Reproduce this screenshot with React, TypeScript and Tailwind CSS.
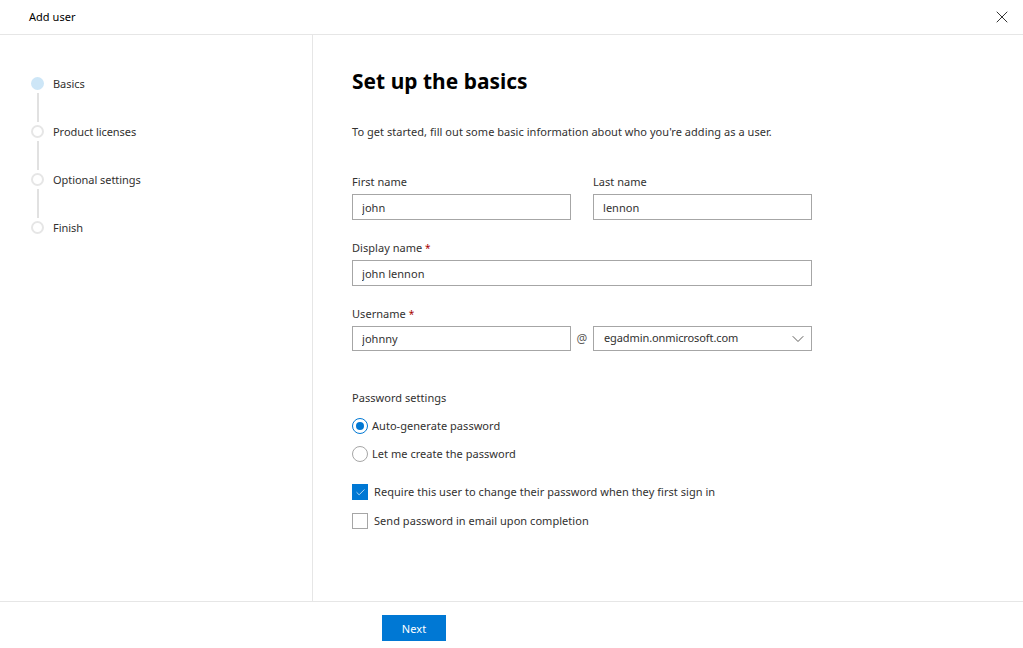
import { X, ChevronDown, Check } from "lucide-react";

const steps = ["Basics", "Product licenses", "Optional settings", "Finish"];

function Field({ label, value, required, className }: { label: string; value: string; required?: boolean; className?: string }) {
  return (
    <div className={className}>
      <div className="h-[18px] leading-[18px] text-[#323130]">
        {label}
        {required && <span className="text-[#a80000] text-[10px]"> *</span>}
      </div>
      <input
        defaultValue={value}
        className="block mt-[3px] w-full h-[26px] px-[9px] border border-[#a6a6a6] text-[#323130] outline-none"
      />
    </div>
  );
}

export default function App() {
  return (
    <div className="w-[1023px] h-[648px] overflow-hidden flex flex-col bg-white text-[11px] tracking-[0.04px] font-['Noto_Sans','Open_Sans',sans-serif]">
      {/* Header */}
      <div className="h-[35px] shrink-0 flex items-center justify-between pl-[29px] pr-[11px] border-b border-[#e6e6e6]">
        <span className="text-black">Add user</span>
        <X className="w-[20px] h-[20px] text-[#333]" strokeWidth={1.2} />
      </div>

      <div className="flex-1 flex min-h-0">
        {/* Steps */}
        <div className="w-[313px] shrink-0 border-r border-[#e6e6e6] pt-[42px] pl-[31px]">
          {steps.map((s, i) => (
            <div key={s}>
              <div className="flex items-center h-[13px]">
                <span className={i === 0 ? "w-[13px] h-[13px] rounded-full bg-[#cde6f7]" : "w-[13px] h-[13px] rounded-full border-2 border-[#e6e6e6]"} />
                <span className="ml-[9px] pt-[2px] text-[#323130] tracking-[-0.05px]">{s}</span>
              </div>
              {i < steps.length - 1 && <div className="w-[2px] h-[29px] ml-[6px] my-[3px] bg-[#e1e1e1]" />}
            </div>
          ))}
        </div>

        {/* Form */}
        <div className="flex-1 pl-[39px] pt-[31px]">
          <h1 className="text-[20.9px] leading-[30px] font-bold text-black">Set up the basics</h1>
          <p className="mt-[27px] leading-[18px] text-[#323130]">
            To get started, fill out some basic information about who you're adding as a user.
          </p>

          <div className="w-[460px] mt-[32px]">
            <div className="flex gap-[22px]">
              <Field label="First name" value="john" className="w-[219px]" />
              <Field label="Last name" value="lennon" className="w-[219px]" />
            </div>
            <Field label="Display name" value="john lennon" required className="mt-[19px]" />
            <div className="mt-[19px] h-[18px] leading-[18px] text-[#323130]">
              Username <span className="text-[#a80000] text-[10px]">*</span>
            </div>
            <div className="mt-[3px] flex items-center">
              <input
                defaultValue="johnny"
                className="w-[219px] h-[25px] px-[9px] border border-[#a6a6a6] text-[#323130] outline-none"
              />
              <span className="w-[22px] text-center text-[#605e5c] text-[12px]">@</span>
              <div className="w-[219px] h-[25px] pl-[10px] pr-[3px] flex items-center justify-between border border-[#a6a6a6] text-[#323130] tracking-[-0.1px]">
                egadmin.onmicrosoft.com
                <ChevronDown className="w-[20px] h-[20px] text-[#605e5c]" strokeWidth={1.2} />
              </div>
            </div>
          </div>

          <div className="mt-[38px] leading-[18px] text-[#323130]">Password settings</div>
          <div className="mt-[11px] flex flex-col gap-[12px]">
            <label className="flex items-center h-[16px] text-[#323130]">
              <span className="w-[16px] h-[16px] rounded-full border border-[#0078d4] flex items-center justify-center">
                <span className="w-[8px] h-[8px] rounded-full bg-[#0078d4]" />
              </span>
              <span className="ml-[4px]">Auto-generate password</span>
            </label>
            <label className="flex items-center h-[16px] text-[#323130]">
              <span className="w-[16px] h-[16px] rounded-full border border-[#a6a6a6]" />
              <span className="ml-[4px]">Let me create the password</span>
            </label>
          </div>

          <div className="mt-[22px] flex flex-col gap-[13px]">
            <label className="flex items-center h-[16px] text-[#323130]">
              <span className="w-[16px] h-[16px] bg-[#0078d4] flex items-center justify-center">
                <Check className="w-[11px] h-[11px] text-white" strokeWidth={1.5} />
              </span>
              <span className="ml-[6px]">Require this user to change their password when they first sign in</span>
            </label>
            <label className="flex items-center h-[16px] text-[#323130]">
              <span className="w-[16px] h-[16px] border border-[#a6a6a6]" />
              <span className="ml-[6px]">Send password in email upon completion</span>
            </label>
          </div>
        </div>
      </div>

      {/* Footer */}
      <div className="h-[47px] shrink-0 border-t border-[#e6e6e6] pl-[382px] pt-[13px]">
        <button className="w-[64px] h-[26px] pt-[2px] bg-[#0078d4] text-white">Next</button>
      </div>
    </div>
  );
}
